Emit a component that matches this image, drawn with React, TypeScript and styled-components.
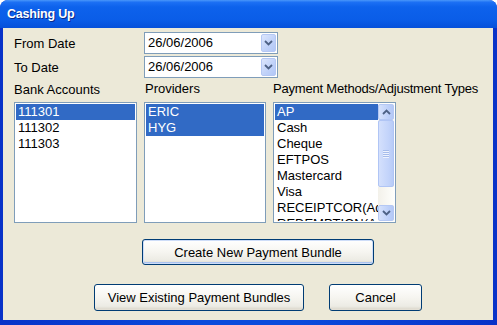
import styled, { createGlobalStyle } from 'styled-components'

const GlobalStyle = createGlobalStyle`
  html, body {
    margin: 0;
    padding: 0;
    background: #ffffff;
  }
  body {
    font-family: 'Liberation Sans', Arial, sans-serif;
    font-size: 13px;
    color: #000;
  }
`

const BEIGE = '#ECE9D8'
const SELECTED = '#316AC5'
const FIELD_BORDER = '#7F9DB9'

const St = {
  Window: styled.div`
    width: 497px;
    height: 325px;
    display: flex;
    flex-direction: column;
    border-radius: 8px 8px 0 0;
    overflow: hidden;
    background: #0A3FD6;
  `,
  TitleBar: styled.div`
    flex: none;
    height: 28px;
    display: flex;
    align-items: center;
    padding-left: 7px;
    background: linear-gradient(
      to bottom,
      #4A97FA 0%,
      #1C70F4 8%,
      #0D62EC 25%,
      #0A5DE8 70%,
      #0650DA 100%
    );
    color: #ffffff;
    font-weight: bold;
    font-size: 12.5px;
    letter-spacing: -0.2px;
    text-shadow: 1px 1px 0 #0A2A8A;
  `,
  Frame: styled.div`
    flex: 1;
    display: flex;
    padding: 0 4px 5px 3px;
    background: linear-gradient(to right, #0832C8, #0A4BDC 40%, #0A4BDC 60%, #0832C8);
  `,
  Body: styled.div`
    flex: 1;
    background: ${BEIGE};
    padding: 4px 0 0 11px;
    display: flex;
    flex-direction: column;
  `,
  DateRow: styled.div`
    display: flex;
    align-items: center;
    height: 22px;
    & + & {
      margin-top: 2px;
    }
  `,
  Label: styled.div<{ width?: number }>`
    width: ${({ width }) => (width ? `${width}px` : 'auto')};
    line-height: 15px;
    white-space: nowrap;
  `,
  Combo: styled.div`
    width: 134px;
    height: 22px;
    box-sizing: border-box;
    border: 1px solid ${FIELD_BORDER};
    background: #ffffff;
    display: flex;
    align-items: stretch;
    padding: 1px;
  `,
  ComboText: styled.div`
    flex: 1;
    padding-left: 2px;
    line-height: 18px;
  `,
  ArrowButton: styled.div<{ w: number }>`
    width: ${({ w }) => w}px;
    flex: none;
    box-sizing: border-box;
    border: 1px solid #B5C8F4;
    border-radius: 2px;
    background: linear-gradient(to bottom right, #DCE6FC, #BFD1F9 60%, #B2C7F6);
    display: flex;
    align-items: center;
    justify-content: center;
  `,
  Lists: styled.div`
    display: grid;
    grid-template-columns: 123px 122px 123px;
    grid-template-rows: 24px 121px;
    column-gap: 7px;
  `,
  ListLabel: styled.div<{ bottom: number; tight?: boolean }>`
    align-self: end;
    line-height: 15px;
    padding-bottom: ${({ bottom }) => bottom}px;
    letter-spacing: ${({ tight }) => (tight ? '-0.2px' : 'normal')};
    white-space: nowrap;
  `,
  ListBox: styled.div`
    box-sizing: border-box;
    border: 1px solid ${FIELD_BORDER};
    background: #ffffff;
    padding: 1px;
    display: flex;
    overflow: hidden;
  `,
  Items: styled.div`
    flex: 1;
    min-width: 0;
    overflow: hidden;
  `,
  Item: styled.div<{ selected?: boolean }>`
    height: 16px;
    line-height: 16px;
    padding-left: 2px;
    white-space: nowrap;
    overflow: hidden;
    background: ${({ selected }) => (selected ? SELECTED : 'transparent')};
    color: ${({ selected }) => (selected ? '#ffffff' : '#000000')};
  `,
  ScrollBar: styled.div`
    width: 16px;
    flex: none;
    display: flex;
    flex-direction: column;
    background: #F7F6F1;
  `,
  ScrollButton: styled.div`
    height: 16px;
    flex: none;
    box-sizing: border-box;
    border: 1px solid #B5C8F4;
    border-radius: 2px;
    background: linear-gradient(to right, #D6E2FC, #BCCFF9 70%, #B4C8F6);
    display: flex;
    align-items: center;
    justify-content: center;
  `,
  Thumb: styled.div`
    height: 67px;
    flex: none;
    box-sizing: border-box;
    border: 1px solid #B0C5F5;
    border-radius: 2px;
    background: linear-gradient(to right, #D4E0FC, #C2D3FA 70%, #B8CCF7);
    display: flex;
    flex-direction: column;
    align-items: center;
    justify-content: center;
    gap: 1px;
  `,
  Grip: styled.div`
    width: 6px;
    height: 1px;
    background: #A6BCEB;
    box-shadow: 0 1px 0 #EEF3FE;
  `,
  Track: styled.div`
    flex: 1;
    background: linear-gradient(to right, #F3F1EA, #FEFEFB);
  `,
  ButtonRow: styled.div<{ top: number; left: number }>`
    display: flex;
    margin-top: ${({ top }) => top}px;
    padding-left: ${({ left }) => left}px;
    gap: 25px;
  `,
  Button: styled.button<{ w: number; h: number; isDefault?: boolean }>`
    width: ${({ w }) => w}px;
    height: ${({ h }) => h}px;
    box-sizing: border-box;
    border: 1px solid #003C74;
    border-radius: 3px;
    padding: 0;
    font-family: 'Liberation Sans', Arial, sans-serif;
    font-size: 13px;
    color: #000000;
    background: linear-gradient(to bottom, #FFFFFF 0%, #F6F5F0 50%, #ECEBE4 85%, #D8D3C6 100%);
    box-shadow: ${({ isDefault }) =>
      isDefault
        ? 'inset 0 0 0 1px #CEDDF8, inset 0 -1px 0 1px #A9C2F0'
        : 'inset 0 -1px 0 #E3DFD4'};
  `,
}

const Chevron = ({ up }: { up?: boolean }) => (
  <svg width="9" height="6" viewBox="0 0 9 6">
    <path
      d={up ? 'M1 5 L4.5 1.5 L8 5' : 'M1 1 L4.5 4.5 L8 1'}
      fill="none"
      stroke="#4D6185"
      strokeWidth="1.8"
    />
  </svg>
)

const bankAccounts = ['111301', '111302', '111303']
const providers = ['ERIC', 'HYG']
const paymentMethods = [
  'AP',
  'Cash',
  'Cheque',
  'EFTPOS',
  'Mastercard',
  'Visa',
  'RECEIPTCOR(Adjustment)',
  'REDEMPTION(Adjustment)',
]

const DateField = ({ label, value }: { label: string; value: string }) => (
  <St.DateRow>
    <St.Label width={130}>{label}</St.Label>
    <St.Combo>
      <St.ComboText>{value}</St.ComboText>
      <St.ArrowButton w={15}>
        <Chevron />
      </St.ArrowButton>
    </St.Combo>
  </St.DateRow>
)

const App = () => {
  return (
    <>
      <GlobalStyle />
      <St.Window>
        <St.TitleBar>Cashing Up</St.TitleBar>
        <St.Frame>
          <St.Body>
            <DateField label="From Date" value="26/06/2006" />
            <DateField label="To Date" value="26/06/2006" />
            <St.Lists>
              <St.ListLabel bottom={5}>Bank Accounts</St.ListLabel>
              <St.ListLabel bottom={6} style={{ paddingLeft: 1 }}>
                Providers
              </St.ListLabel>
              <St.ListLabel bottom={6} tight>
                Payment Methods/Adjustment Types
              </St.ListLabel>
              <St.ListBox>
                <St.Items>
                  {bankAccounts.map((acc, i) => (
                    <St.Item key={acc} selected={i === 0}>
                      {acc}
                    </St.Item>
                  ))}
                </St.Items>
              </St.ListBox>
              <St.ListBox>
                <St.Items>
                  {providers.map((p) => (
                    <St.Item key={p} selected>
                      {p}
                    </St.Item>
                  ))}
                </St.Items>
              </St.ListBox>
              <St.ListBox>
                <St.Items>
                  {paymentMethods.map((m, i) => (
                    <St.Item key={m} selected={i === 0}>
                      {m}
                    </St.Item>
                  ))}
                </St.Items>
                <St.ScrollBar>
                  <St.ScrollButton>
                    <Chevron up />
                  </St.ScrollButton>
                  <St.Thumb>
                    <St.Grip />
                    <St.Grip />
                    <St.Grip />
                    <St.Grip />
                  </St.Thumb>
                  <St.Track />
                  <St.ScrollButton>
                    <Chevron />
                  </St.ScrollButton>
                </St.ScrollBar>
              </St.ListBox>
            </St.Lists>
            <St.ButtonRow top={16} left={128}>
              <St.Button w={232} h={26} isDefault>
                Create New Payment Bundle
              </St.Button>
            </St.ButtonRow>
            <St.ButtonRow top={19} left={80}>
              <St.Button w={210} h={27}>
                View Existing Payment Bundles
              </St.Button>
              <St.Button w={93} h={27}>
                Cancel
              </St.Button>
            </St.ButtonRow>
          </St.Body>
        </St.Frame>
      </St.Window>
    </>
  )
}

export default App
